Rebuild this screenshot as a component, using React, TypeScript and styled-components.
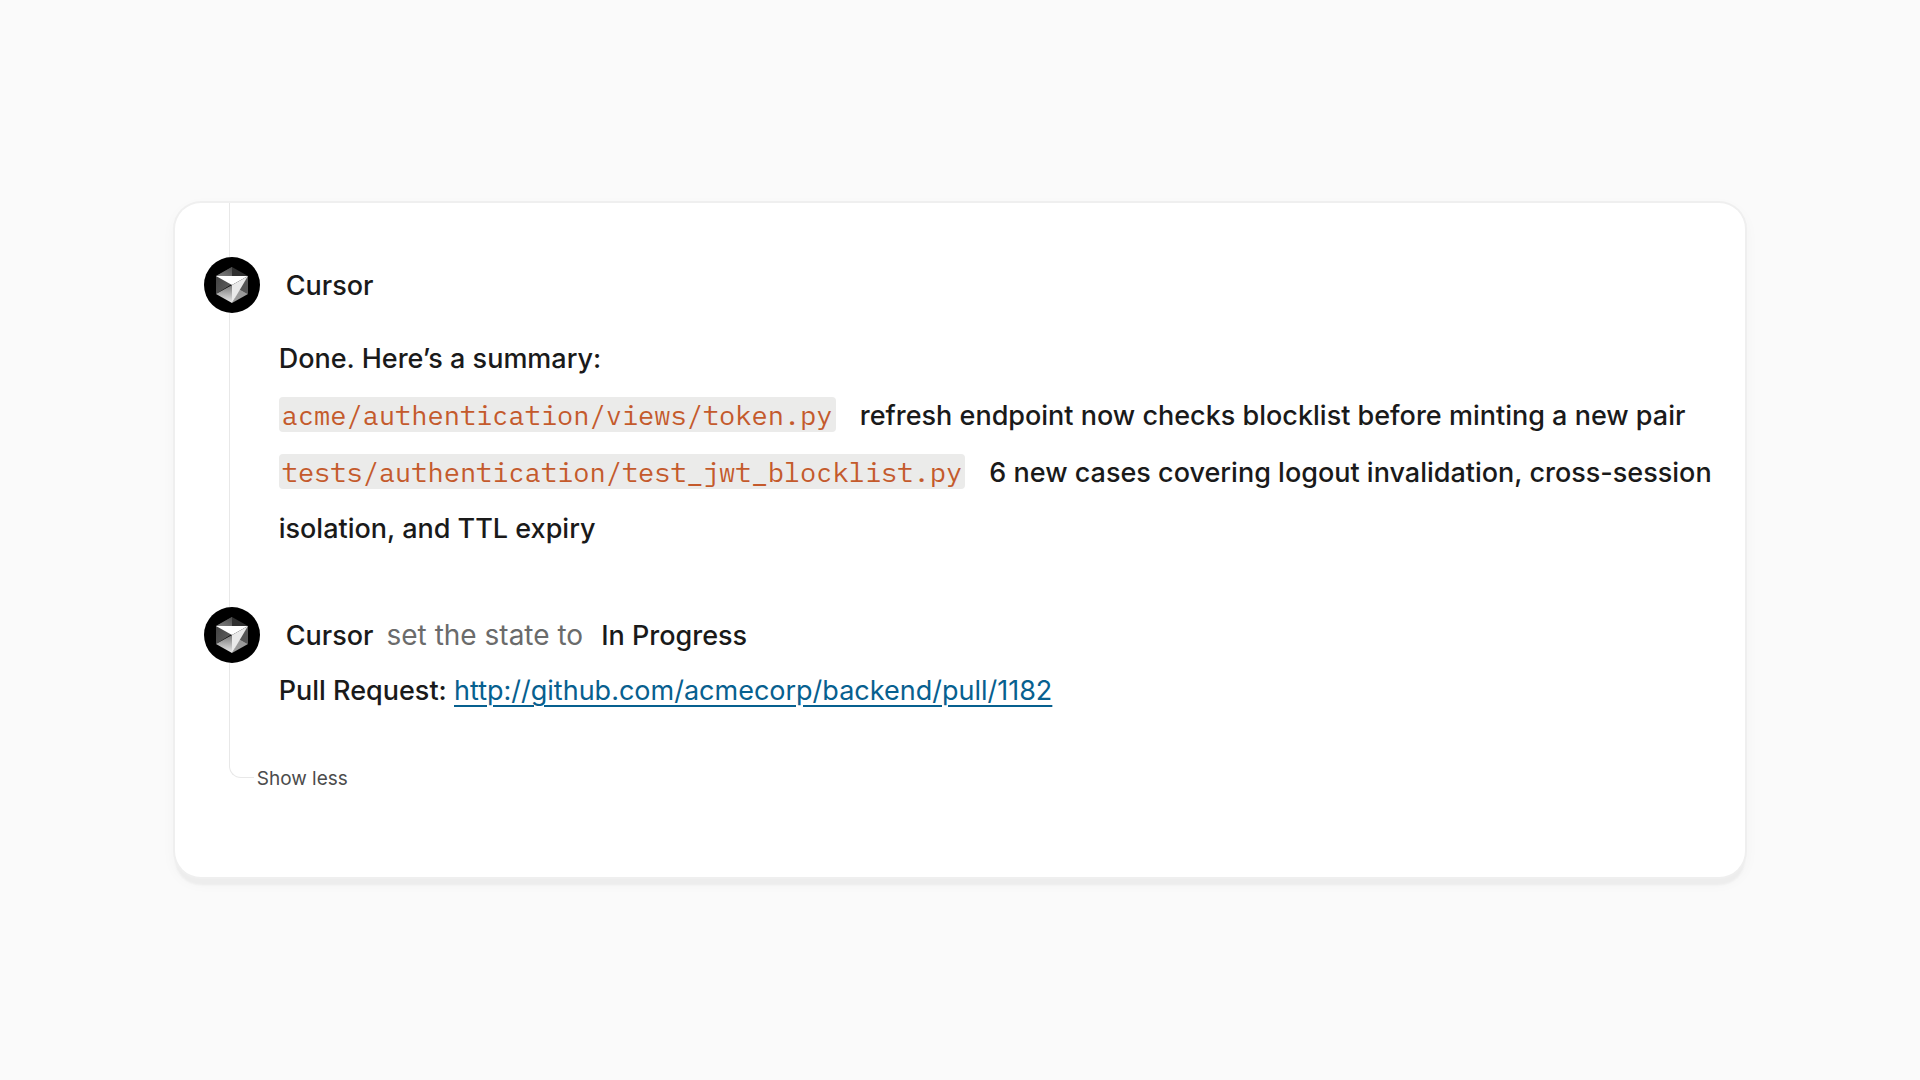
import React from "react";
import styled, { createGlobalStyle } from "styled-components";

const lineColor = "#e8e8e8";

const GlobalStyle = createGlobalStyle`
  *, *::before, *::after { box-sizing: border-box; }
  body {
    margin: 0;
    background: #fafafa;
    color: #1a1a1a;
    font-family: Inter, "Liberation Sans", sans-serif;
  }
`;

const Page = styled.main`
  min-height: 100vh;
  display: flex;
  align-items: center;
  padding: 48px 9.1vw;
`;

const Card = styled.section`
  flex: 1;
  min-width: 0;
  padding: 0 24px 86px 29px;
  background: #ffffff;
  border-radius: 26px;
  box-shadow:
    0 0 0 2px #efefef,
    0 8px 2px #ededed,
    0 5px 14px 2px rgba(0, 0, 0, 0.03);
`;

const Feed = styled.ol`
  list-style: none;
  margin: 0;
  padding: 0;
`;

const Entry = styled.li`
  display: grid;
  grid-template-columns: 56px minmax(0, 1fr);
  column-gap: 19px;
`;

const Rail = styled.div`
  display: flex;
  flex-direction: column;
`;

const RailLine = styled.span<{ $lead?: boolean }>`
  flex: ${(p) => (p.$lead ? "0 0 54px" : "1")};
  width: 1px;
  margin-left: 25px;
  background: ${lineColor};
`;

const Content = styled.div<{ $first?: boolean }>`
  padding: ${(p) => (p.$first ? "54px 0 50px" : "0 0 32px")};
`;

const Heading = styled.header<{ $spaced?: boolean }>`
  display: flex;
  align-items: center;
  height: 56px;
  padding-left: 7px;
  margin-bottom: ${(p) => (p.$spaced ? "18px" : "0")};
  font-size: 27px;
  font-weight: 500;
  white-space: pre;
`;

const Action = styled.span`
  margin: 0 18px 0 13px;
  color: #6b6b6b;
  font-size: 28px;
  font-weight: 400;
`;

const Text = styled.p`
  margin: 0;
  font-size: 27px;
  font-weight: 500;
  line-height: 56px;
`;

const Code = styled.code`
  margin-right: 17px;
  padding: 0 3px;
  border-radius: 4px;
  background: #ebebea;
  color: #c45a2c;
  font-family: "IBM Plex Mono", "Liberation Mono", monospace;
  font-size: 27px;
  font-weight: 400;
`;

const Link = styled.a`
  color: #07608f;
  font-weight: 400;
  text-decoration: underline;
  text-decoration-thickness: 2px;
  text-underline-offset: 5px;
`;

const Footer = styled.footer`
  display: flex;
  align-items: flex-start;
  height: 40px;
  padding-left: 25px;
`;

const Elbow = styled.span`
  width: 25px;
  height: 27px;
  border: solid ${lineColor};
  border-width: 0 0 1px 1px;
  border-bottom-left-radius: 12px;
`;

const ToggleButton = styled.button`
  margin: 16px 0 0;
  padding: 0 3px;
  border: 0;
  background: none;
  color: #4c4c4c;
  font: 400 19px/24px Inter, "Liberation Sans", sans-serif;
  cursor: pointer;
`;

function Avatar() {
  return (
    <svg width="56" height="56" viewBox="0 0 56 56" aria-hidden="true">
      <defs>
        <linearGradient id="base" x1="0" y1="0" x2="0" y2="1">
          <stop offset="0" stopColor="#777" />
          <stop offset="1" stopColor="#ececec" />
        </linearGradient>
        <linearGradient id="left" x1="0" y1="0" x2="1" y2="1">
          <stop offset="0" stopColor="#3c3c3c" />
          <stop offset="1" stopColor="#626262" />
        </linearGradient>
        <linearGradient id="top" x1="1" y1="0" x2="0" y2="1">
          <stop offset="0" stopColor="#4a4a4a" />
          <stop offset="1" stopColor="#858585" />
        </linearGradient>
      </defs>
      <circle cx="28" cy="28" r="28" fill="#000" />
      <path d="M28 10 12 19v18l16-10z" fill="url(#left)" />
      <path d="M28 10 12 19h16z" fill="url(#top)" />
      <path d="M28 10 44 19H28z" fill="#303030" />
      <path d="M44 19v18l-9-5z" fill="#555" />
      <path d="M12 37 28 28v18z" fill="url(#base)" />
      <path d="M44 37 28 46l7-14z" fill="#9a9a9a" />
      <path d="M12 19h32L28 28z" fill="#fff" />
      <path d="M44 19 28 46V28z" fill="#e9e9e9" />
    </svg>
  );
}

export default function App() {
  return (
    <>
      <GlobalStyle />
      <Page>
        <Card aria-label="Activity">
          <Feed>
            <Entry>
              <Rail>
                <RailLine $lead />
                <Avatar />
                <RailLine />
              </Rail>
              <Content $first>
                <Heading $spaced>Cursor</Heading>
                <Text>Done. Here’s a summary:</Text>
                <Text>
                  <Code>acme/authentication/views/token.py</Code> refresh
                  endpoint now checks blocklist before minting a new pair
                </Text>
                <Text>
                  <Code>tests/authentication/test_jwt_blocklist.py</Code> 6 new
                  cases covering logout invalidation, cross-session isolation,
                  and TTL expiry
                </Text>
              </Content>
            </Entry>
            <Entry>
              <Rail>
                <Avatar />
                <RailLine />
              </Rail>
              <Content>
                <Heading>
                  Cursor<Action>set the state to</Action>
                  <span>In Progress</span>
                </Heading>
                <Text>
                  Pull Request:{" "}
                  <Link href="http://github.com/acmecorp/backend/pull/1182">
                    http://github.com/acmecorp/backend/pull/1182
                  </Link>
                </Text>
              </Content>
            </Entry>
          </Feed>
          <Footer>
            <Elbow />
            <ToggleButton type="button">Show less</ToggleButton>
          </Footer>
        </Card>
      </Page>
    </>
  );
}
